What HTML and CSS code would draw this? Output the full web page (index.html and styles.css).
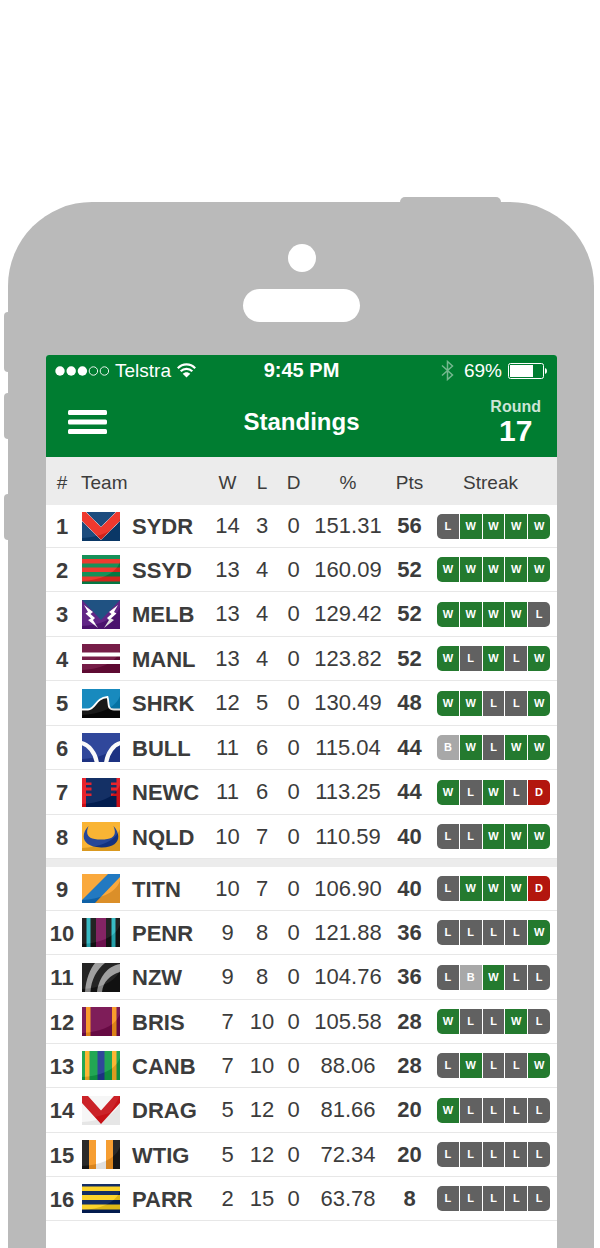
FILE: index.html
```html
<!DOCTYPE html>
<html lang="en">
<head>
<meta charset="utf-8">
<meta name="viewport" content="width=device-width, initial-scale=1">
<title>Standings</title>
<link rel="stylesheet" href="styles.css">
</head>
<body>
<svg class="defs" aria-hidden="true">
  <symbol id="gloss" viewBox="0 0 38 29"><path d="M0 0H38V7C33 20 17 25 0 26Z" fill="#fff" opacity=".07"/><path d="M38 7C33 20 17 25 0 26V29H38Z" fill="#000" opacity=".12"/></symbol>
</svg>
<div class="phone">
  <span class="key key-power"></span>
  <span class="key key-mute"></span>
  <span class="key key-up"></span>
  <span class="key key-down"></span>
  <div class="bezel">
    <span class="camera"></span>
    <span class="speaker"></span>
  </div>
  <div class="screen">
    <header class="top">
      <div class="status">
        <div class="carrier">
          <svg width="54" height="10" viewBox="0 0 54 10" aria-hidden="true"><g fill="#fff"><circle cx="5" cy="5" r="4.7"/><circle cx="16.2" cy="5" r="4.7"/><circle cx="27.4" cy="5" r="4.7"/></g><g fill="none" stroke="#fff" stroke-width=".9"><circle cx="38.4" cy="5" r="4.2"/><circle cx="49.4" cy="5" r="4.2"/></g></svg>
          <span>Telstra</span>
          <svg width="19" height="15" viewBox="0 0 19 15" aria-hidden="true"><g fill="none" stroke="#fff" stroke-width="2.2"><path d="M.8 5.2C5.8 .1 13.2 .1 18.200 5.200"/><path d="M3.700 8.300C7 5 12 5 15.300 8.300"/></g><path d="M5.700 10.800C7.900 8.700 11.100 8.700 13.300 10.800L9.500 14.500Z" fill="#fff"/></svg>
        </div>
        <span class="time">9:45 PM</span>
        <div class="power">
          <svg class="bluetooth" width="13" height="21" viewBox="0 0 13 21" aria-hidden="true"><path d="M1 5.500L11.500 15L6.500 19.500V1.500L11.500 6L1 15.500" fill="none" stroke="#fff" stroke-width="1.500"/></svg>
          <span>69%</span>
          <svg width="40" height="16" viewBox="0 0 40 16" aria-hidden="true"><rect x=".5" y=".5" width="35" height="15" rx="2" fill="none" stroke="#fff"/><rect x="2" y="2" width="23" height="12" fill="#fff"/><path d="M37 5Q39 5.500 39 8T37 11Z" fill="#fff"/></svg>
        </div>
      </div>
      <div class="nav">
        <button class="menu" type="button" aria-label="Menu"><svg width="39" height="24" viewBox="0 0 39 24" fill="#fff"><rect width="39" height="5" rx="1.500"/><rect y="9.500" width="39" height="5" rx="1.500"/><rect y="19" width="39" height="5" rx="1.500"/></svg></button>
        <h1>Standings</h1>
        <div class="round"><span class="round-label">Round</span><span class="round-number">17</span></div>
      </div>
    </header>
    <table>
      <colgroup><col class="c-rank"><col class="c-team"><col class="c-w"><col class="c-l"><col class="c-d"><col class="c-pct"><col class="c-pts"><col class="c-streak"></colgroup>
      <thead><tr><th>#</th><th class="team-head">Team</th><th>W</th><th>L</th><th>D</th><th>%</th><th>Pts</th><th class="streak-head">Streak</th></tr></thead>
      <tbody>
        <tr><td class="rank">1</td><td><div class="team"><svg class="logo" viewBox="0 0 38 29"><path fill="#0c3f75" d="M0 0h38v29H0z"/><path d="M-4-8L19 15L42-8V5L19 28L-4 5Z" fill="#ee2a20" stroke="#fff" stroke-width=".8" stroke-dasharray="1 .6"/><use href="#gloss"/></svg><span>SYDR</span></div></td><td>14</td><td>3</td><td>0</td><td>151.31</td><td class="pts">56</td><td><div class="streak"><b class="l">L</b><b>W</b><b>W</b><b>W</b><b>W</b></div></td></tr>
        <tr><td class="rank">2</td><td><div class="team"><svg class="logo" viewBox="0 0 38 29"><path fill="#05894d" d="M0 0h38v29H0z"/><path fill="#ed2c20" d="M0 4h38v4.500H0zM0 12.500h38V17H0zM0 21.500h38v5H0z"/><use href="#gloss"/></svg><span>SSYD</span></div></td><td>13</td><td>4</td><td>0</td><td>160.09</td><td class="pts">52</td><td><div class="streak"><b>W</b><b>W</b><b>W</b><b>W</b><b>W</b></div></td></tr>
        <tr><td class="rank">3</td><td><div class="team"><svg class="logo" viewBox="0 0 38 29"><path fill="#55167d" d="M0 0h38v29H0z"/><path fill="#104579" d="M0 0H38L19 20Z"/><path fill="#fff" d="M2 5L11 12L8.500 14L13 18L11 20L16 28L6 20L9 18.500L3.500 13.500L6 12ZM36 5L27 12L29.500 14L25 18L27 20L22 28L32 20L29 18.500L34.500 13.500L32 12Z"/><use href="#gloss"/></svg><span>MELB</span></div></td><td>13</td><td>4</td><td>0</td><td>129.42</td><td class="pts">52</td><td><div class="streak"><b>W</b><b>W</b><b>W</b><b>W</b><b class="l">L</b></div></td></tr>
        <tr><td class="rank">4</td><td><div class="team"><svg class="logo" viewBox="0 0 38 29"><path fill="#6c0c3a" d="M0 0h38v29H0z"/><use href="#gloss"/><path fill="#fff" d="M0 8.500h38v4H0zM0 16h38v4H0z"/></svg><span>MANL</span></div></td><td>13</td><td>4</td><td>0</td><td>123.82</td><td class="pts">52</td><td><div class="streak"><b>W</b><b class="l">L</b><b>W</b><b class="l">L</b><b>W</b></div></td></tr>
        <tr><td class="rank">5</td><td><div class="team"><svg class="logo" viewBox="0 0 38 29"><path fill="#0782ba" d="M0 0h38v29H0z"/><path d="M-2 20.500H6C14 20 13 9 25.500 8C27.500 14 24.500 20.500 32 20.500H40V32H-2Z" fill="#080808" stroke="#fff" stroke-width="1.800"/><use href="#gloss"/></svg><span>SHRK</span></div></td><td>12</td><td>5</td><td>0</td><td>130.49</td><td class="pts">48</td><td><div class="streak"><b>W</b><b>W</b><b class="l">L</b><b class="l">L</b><b>W</b></div></td></tr>
        <tr><td class="rank">6</td><td><div class="team"><svg class="logo" viewBox="0 0 38 29"><path fill="#213a94" d="M0 0h38v29H0z"/><use href="#gloss"/><path d="M-1 10C6 11 14 20 15 31M39 10C32 11 25 20 24 31" fill="none" stroke="#fafafa" stroke-width="4.200"/></svg><span>BULL</span></div></td><td>11</td><td>6</td><td>0</td><td>115.04</td><td class="pts">44</td><td><div class="streak"><b class="b">B</b><b>W</b><b class="l">L</b><b>W</b><b>W</b></div></td></tr>
        <tr><td class="rank">7</td><td><div class="team"><svg class="logo" viewBox="0 0 38 29"><path fill="#03215a" d="M0 0h38v29H0z"/><path fill="#e7141c" d="M0 0H4V4.500H9.500V7H4V9.500H9.500V12.500H4V15.500H9.500V18H4V29H0ZM38 0H34.500V4.500H29V7H34.500V9.500H29V12.500H34.500V15.500H29V18H34.500V29H38Z"/><use href="#gloss"/></svg><span>NEWC</span></div></td><td>11</td><td>6</td><td>0</td><td>113.25</td><td class="pts">44</td><td><div class="streak"><b>W</b><b class="l">L</b><b>W</b><b class="l">L</b><b class="d">D</b></div></td></tr>
        <tr><td class="rank">8</td><td><div class="team"><svg class="logo" viewBox="0 0 38 29"><path fill="#f9af25" d="M0 0h38v29H0z"/><path fill="#173a91" d="M6.500 4C-2 13 0 25 19 25.500S40 13 31.500 4C35 13 32 17.500 19 17.500S3 13 6.500 4Z"/><use href="#gloss"/></svg><span>NQLD</span></div></td><td>10</td><td>7</td><td>0</td><td>110.59</td><td class="pts">40</td><td><div class="streak"><b class="l">L</b><b class="l">L</b><b>W</b><b>W</b><b>W</b></div></td></tr>
      </tbody>
      <tbody class="lower">
        <tr><td class="rank">9</td><td><div class="team"><svg class="logo" viewBox="0 0 38 29"><path fill="#faa32f" d="M0 0h38v29H0z"/><path fill="#126fbd" d="M26 0H38V3L13 29H0V26Z"/><use href="#gloss"/></svg><span>TITN</span></div></td><td>10</td><td>7</td><td>0</td><td>106.90</td><td class="pts">40</td><td><div class="streak"><b class="l">L</b><b>W</b><b>W</b><b>W</b><b class="d">D</b></div></td></tr>
        <tr><td class="rank">10</td><td><div class="team"><svg class="logo" viewBox="0 0 38 29"><path fill="#141414" d="M0 0h38v29H0z"/><path fill="#29b5c0" d="M4.500 0h4v29h-4zM29.500 0h4v29h-4z"/><path fill="#7b1459" d="M14 0h10v29H14z"/><use href="#gloss"/></svg><span>PENR</span></div></td><td>9</td><td>8</td><td>0</td><td>121.88</td><td class="pts">36</td><td><div class="streak"><b class="l">L</b><b class="l">L</b><b class="l">L</b><b class="l">L</b><b>W</b></div></td></tr>
        <tr><td class="rank">11</td><td><div class="team"><svg class="logo" viewBox="0 0 38 29"><path fill="#141414" d="M0 0h38v29H0z"/><path fill="#989898" d="M13 0H23C15 6 9 17 8.500 29H3C4 16 8 6 13 0ZM38 1V9C28 12 21 19 20 29H15C17 15 25 3 38 1Z"/><use href="#gloss"/></svg><span>NZW</span></div></td><td>9</td><td>8</td><td>0</td><td>104.76</td><td class="pts">36</td><td><div class="streak"><b class="l">L</b><b class="b">B</b><b>W</b><b class="l">L</b><b class="l">L</b></div></td></tr>
        <tr><td class="rank">12</td><td><div class="team"><svg class="logo" viewBox="0 0 38 29"><path fill="#750c4d" d="M0 0h38v29H0z"/><path fill="#fa951c" d="M4 0h4.500v29H4zM30 0h4.500v29H30z"/><use href="#gloss"/></svg><span>BRIS</span></div></td><td>7</td><td>10</td><td>0</td><td>105.58</td><td class="pts">28</td><td><div class="streak"><b>W</b><b class="l">L</b><b class="l">L</b><b>W</b><b class="l">L</b></div></td></tr>
        <tr><td class="rank">13</td><td><div class="team"><svg class="logo" viewBox="0 0 38 29"><path fill="#12a148" d="M0 0h38v29H0z"/><path fill="#fbb125" d="M3 0h4.500v29H3zM30 0h4.500v29H30z"/><path fill="#213a94" d="M15.500 0h7v29h-7z"/><use href="#gloss"/></svg><span>CANB</span></div></td><td>7</td><td>10</td><td>0</td><td>88.06</td><td class="pts">28</td><td><div class="streak"><b class="l">L</b><b>W</b><b class="l">L</b><b class="l">L</b><b>W</b></div></td></tr>
        <tr><td class="rank">14</td><td><div class="team"><svg class="logo" viewBox="0 0 38 29"><path fill="#f6f6f6" d="M0 0h38v29H0z"/><path fill="#e6e6e6" d="M38 7C33 20 17 25 0 26V29H38Z"/><path fill="#c71117" d="M0 0H6L19 14.500L32 0H38V7L19 28L0 7Z"/><path fill="#fff" d="M0 0H6L19 14.500L32 0H38L28 17L13 21L0 7Z" opacity=".08"/></svg><span>DRAG</span></div></td><td>5</td><td>12</td><td>0</td><td>81.66</td><td class="pts">20</td><td><div class="streak"><b>W</b><b class="l">L</b><b class="l">L</b><b class="l">L</b><b class="l">L</b></div></td></tr>
        <tr><td class="rank">15</td><td><div class="team"><svg class="logo" viewBox="0 0 38 29"><path fill="#191919" d="M0 0h38v29H0z"/><path fill="#f69723" d="M7 0h24v29H7z"/><path fill="#fff" d="M14 0h10v29H14z"/><use href="#gloss"/></svg><span>WTIG</span></div></td><td>5</td><td>12</td><td>0</td><td>72.34</td><td class="pts">20</td><td><div class="streak"><b class="l">L</b><b class="l">L</b><b class="l">L</b><b class="l">L</b><b class="l">L</b></div></td></tr>
        <tr><td class="rank">16</td><td><div class="team"><svg class="logo" viewBox="0 0 38 29"><path fill="#031f59" d="M0 0h38v29H0z"/><path fill="#fbd01b" d="M0 2.500h38V7H0zM0 11h38v5H0zM0 20.500h38v5H0z"/><use href="#gloss"/></svg><span>PARR</span></div></td><td>2</td><td>15</td><td>0</td><td>63.78</td><td class="pts">8</td><td><div class="streak"><b class="l">L</b><b class="l">L</b><b class="l">L</b><b class="l">L</b><b class="l">L</b></div></td></tr>
      </tbody>
    </table>
  </div>
</div>
</body>
</html>
```
FILE: styles.css
```css
* { box-sizing: border-box; }
body {
  margin: 0;
  min-height: 100vh;
  padding: 202px 6px 0 8px;
  display: flex;
  flex-direction: column;
  background: #fff;
  color: #3c3c3c;
  font-family: "Liberation Sans", Arial, sans-serif;
}
svg { display: block; flex: none; }
.defs { position: absolute; width: 0; height: 0; }

.phone {
  position: relative;
  flex: 1;
  display: flex;
  flex-direction: column;
  padding: 0 37px 0 38px;
  border-radius: 84px 84px 0 0;
  background: #bababa;
}
.key { position: absolute; background: #bababa; }
.key-power { top: -5px; right: 93px; width: 101px; height: 5px; border-radius: 5px 5px 0 0; }
.key-mute, .key-up, .key-down { left: -4px; width: 4px; height: 46px; border-radius: 4px 0 0 4px; }
.key-mute { top: 110px; height: 60px; }
.key-up { top: 191px; }
.key-down { top: 292px; }

.bezel {
  height: 153px;
  padding-top: 42px;
  display: flex;
  flex-direction: column;
  align-items: center;
  gap: 17px;
}
.camera { width: 28px; height: 28px; border-radius: 50%; background: #fff; }
.speaker { width: 117px; height: 33px; border-radius: 17px; background: #fff; }

.screen { flex: 1; background: #fff; border-radius: 3px 3px 0 0; overflow: hidden; }
.top { background: #007d31; color: #fff; }
.status, .nav {
  display: grid;
  grid-template-columns: 1fr auto 1fr;
  align-items: center;
}
.status { height: 31px; padding: 0 9px; font-size: 19px; line-height: 31px; }
.carrier, .power { display: flex; align-items: center; gap: 6px; }
.power { justify-content: flex-end; }
.bluetooth { opacity: .45; margin-right: 4px; }
.time { font-size: 20px; font-weight: bold; }

.nav { height: 71px; padding: 0 16px; }
.menu { justify-self: start; margin: 0 0 0 6px; padding: 0; border: 0; background: none; cursor: pointer; }
h1 { margin: 0; font-size: 24px; line-height: 28px; }
.round { justify-self: end; display: flex; flex-direction: column; align-items: center; font-weight: bold; }
.round-label { font-size: 16px; line-height: 18px; color: #cce5d6; }
.round-number { font-size: 30px; line-height: 30px; }

table { width: 100%; table-layout: fixed; border-collapse: separate; border-spacing: 0; }
.c-rank { width: 32px; }
.c-w { width: 37px; }
.c-l { width: 32px; }
.c-d { width: 31px; }
.c-pct { width: 78px; }
.c-pts { width: 45px; }
.c-streak { width: 125px; }
th, td { padding: 0; text-align: center; vertical-align: middle; white-space: nowrap; }
th { height: 48px; padding-top: 4px; background: #ececec; font-size: 19px; font-weight: normal; }
.team-head { padding-left: 3px; text-align: left; }
.streak-head { padding-right: 8px; }
td { height: 44px; border-bottom: 1px solid #e7e7e7; font-size: 22px; line-height: 26px; }
tbody tr:nth-child(odd) td { height: 45px; }
tbody tr:first-child td { height: 43px; }
.lower tr:nth-child(n) td { height: 44px; }
.lower tr:nth-child(3n) td { height: 45px; }
.lower tr:first-child td { height: 52px; border-top: 8px solid #ececec; }
.rank, .team, .pts { font-weight: bold; }
.rank, .team span { padding-top: 2px; }
.team { display: flex; align-items: center; gap: 12px; padding-left: 4px; }
.logo { width: 38px; height: 29px; }
.streak { display: flex; gap: 1px; margin: 0 7px 0 5px; border-radius: 5px; overflow: hidden; }
.streak b {
  flex: 1;
  background: #247a2f;
  color: #fff;
  font-size: 11px;
  line-height: 25px;
}
.streak .l { background: #616161; }
.streak .b { background: #a8a8a8; }
.streak .d { background: #b3160e; }
```
